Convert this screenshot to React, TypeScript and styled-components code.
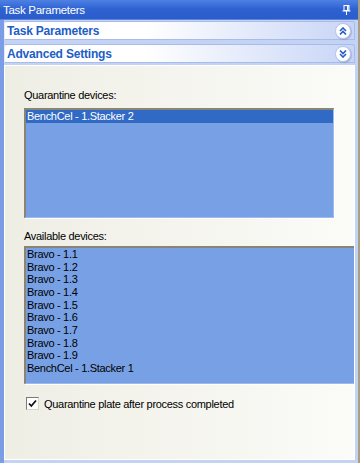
import styled, { createGlobalStyle } from 'styled-components';

const GlobalStyle = createGlobalStyle`
  html, body {
    margin: 0;
    padding: 0;
  }
  body {
    font-family: Tahoma, "Liberation Sans", Arial, sans-serif;
    font-size: 11px;
    letter-spacing: -0.3px;
  }
`;

const quarantine = ['BenchCel - 1.Stacker 2'];
const available = [
  'Bravo - 1.1',
  'Bravo - 1.2',
  'Bravo - 1.3',
  'Bravo - 1.4',
  'Bravo - 1.5',
  'Bravo - 1.6',
  'Bravo - 1.7',
  'Bravo - 1.8',
  'Bravo - 1.9',
  'BenchCel - 1.Stacker 1',
];

const PinIcon = () => (
  <svg width="9" height="10" viewBox="0 0 9 10">
    <rect x="2" y="0.5" width="5" height="5" fill="none" stroke="#fff" />
    <rect x="5" y="1" width="1.5" height="4" fill="#fff" />
    <rect x="0.5" y="5.5" width="8" height="1" fill="#fff" />
    <rect x="4" y="6" width="1" height="4" fill="#fff" />
  </svg>
);

const Chevrons = ({ up }: { up?: boolean }) => (
  <svg width="8" height="8" viewBox="0 0 8 8">
    <g
      fill="none"
      stroke="#215dc6"
      strokeWidth="1.6"
      transform={up ? undefined : 'rotate(180 4 4)'}
    >
      <path d="M1 4 L4 1 L7 4" />
      <path d="M1 7.5 L4 4.5 L7 7.5" />
    </g>
  </svg>
);

const App = () => {
  return (
    <>
      <GlobalStyle />
      <Frame>
        <TitleBar>
          <span>Task Parameters</span>
          <PinIcon />
        </TitleBar>
        <Pane>
          <SectionHeader>
            <span>Task Parameters</span>
            <RoundButton>
              <Chevrons up />
            </RoundButton>
          </SectionHeader>
          <SectionHeader>
            <span>Advanced Settings</span>
            <RoundButton>
              <Chevrons />
            </RoundButton>
          </SectionHeader>
          <Content>
            <Label>Quarantine devices:</Label>
            <ListBox width={310} height={110}>
              {quarantine.map((d, i) => (
                <Item key={d} selected={i === 0}>
                  {d}
                </Item>
              ))}
            </ListBox>
            <Label $gap={12} $after={3}>Available devices:</Label>
            <ListBox width={331} height={138}>
              {available.map((d) => (
                <Item key={d}>{d}</Item>
              ))}
            </ListBox>
            <CheckRow>
              <CheckBox>
                <svg width="9" height="9" viewBox="0 0 9 9">
                  <path d="M1 4.5 L3.3 7 L8 1.5" fill="none" stroke="#111" strokeWidth="1.8" />
                </svg>
              </CheckBox>
              <span>Quarantine plate after process completed</span>
            </CheckRow>
          </Content>
        </Pane>
      </Frame>
    </>
  );
};

export default App;

const Frame = styled.div`
  width: 360px;
  height: 463px;
  display: flex;
  flex-direction: column;
  background: #6f93e2;
  overflow: hidden;
  border-right: 2px solid #a99f84;
  box-sizing: border-box;
`;

const TitleBar = styled.div`
  height: 20px;
  flex: none;
  box-sizing: border-box;
  display: flex;
  align-items: center;
  justify-content: space-between;
  padding: 0 7px 0 3px;
  background: linear-gradient(#4f81e4 0%, #2f63d2 45%, #2b5ccb 100%);
  color: #fff;
  font-size: 11.5px;
  border-bottom: 1px solid #5b84dd;
`;

const Pane = styled.div`
  flex: 1;
  display: flex;
  flex-direction: column;
  gap: 4px;
  padding: 1px 3px 3px 4px;
  background: linear-gradient(90deg, #7a9de6 0, #7a9de6 4px, #c4d2f4 4px);
  min-height: 0;
`;

const SectionHeader = styled.div`
  height: 19px;
  flex: none;
  box-sizing: border-box;
  display: flex;
  align-items: center;
  justify-content: space-between;
  padding: 1px 3px 0 2px;
  border-radius: 3px 3px 0 0;
  background: linear-gradient(90deg, #ffffff 40%, #c8d5f6 100%);
  border: 1px solid #a8bceb;
  border-left-color: #e6ecfb;
  color: #215dc6;
  font-weight: bold;
  font-size: 12px;
  letter-spacing: -0.2px;
`;

const RoundButton = styled.div`
  width: 14px;
  height: 14px;
  border-radius: 50%;
  background: #fff;
  border: 1px solid #b7c6ec;
  display: flex;
  align-items: center;
  justify-content: center;
  box-shadow: 1px 1px 1px rgba(90, 110, 170, 0.35);
`;

const Content = styled.div`
  flex: 1;
  display: flex;
  flex-direction: column;
  align-items: flex-start;
  padding: 23px 0 0 19px;
  margin-top: -2px;
  background: linear-gradient(90deg, #efeee5 0%, #fbfbf8 100%);
  border: 1px solid #fff;
  overflow: hidden;
  color: #000;
`;

const Label = styled.div<{ $gap?: number; $after?: number }>`
  margin-top: ${({ $gap }) => $gap ?? 0}px;
  margin-bottom: ${({ $after }) => $after ?? 6}px;
  line-height: 13px;
`;

const ListBox = styled.div<{ width: number; height: number }>`
  width: ${({ width }) => width}px;
  height: ${({ height }) => height}px;
  flex: none;
  box-sizing: border-box;
  background: #78a0e4;
  border-top: 2px solid #8a8474;
  border-left: 2px solid #8a8474;
  border-right: 1px solid #9dbaf0;
  border-bottom: 1px solid #9dbaf0;
  padding-top: 0;
  box-shadow: 1px 1px 0 #fff;
`;

const Item = styled.div<{ selected?: boolean }>`
  height: 12.67px;
  line-height: 12.67px;
  padding-left: 1px;
  white-space: nowrap;
  color: ${({ selected }) => (selected ? '#fff' : '#000')};
  background: ${({ selected }) => (selected ? '#316ac5' : 'transparent')};
`;

const CheckRow = styled.div`
  display: flex;
  align-items: center;
  gap: 5px;
  margin: 13px 0 0 2px;
`;

const CheckBox = styled.div`
  width: 11px;
  height: 11px;
  background: #fff;
  border: 1px solid #7a7a72;
  border-right-color: #d8d6cc;
  border-bottom-color: #d8d6cc;
  display: flex;
  align-items: center;
  justify-content: center;
`;
